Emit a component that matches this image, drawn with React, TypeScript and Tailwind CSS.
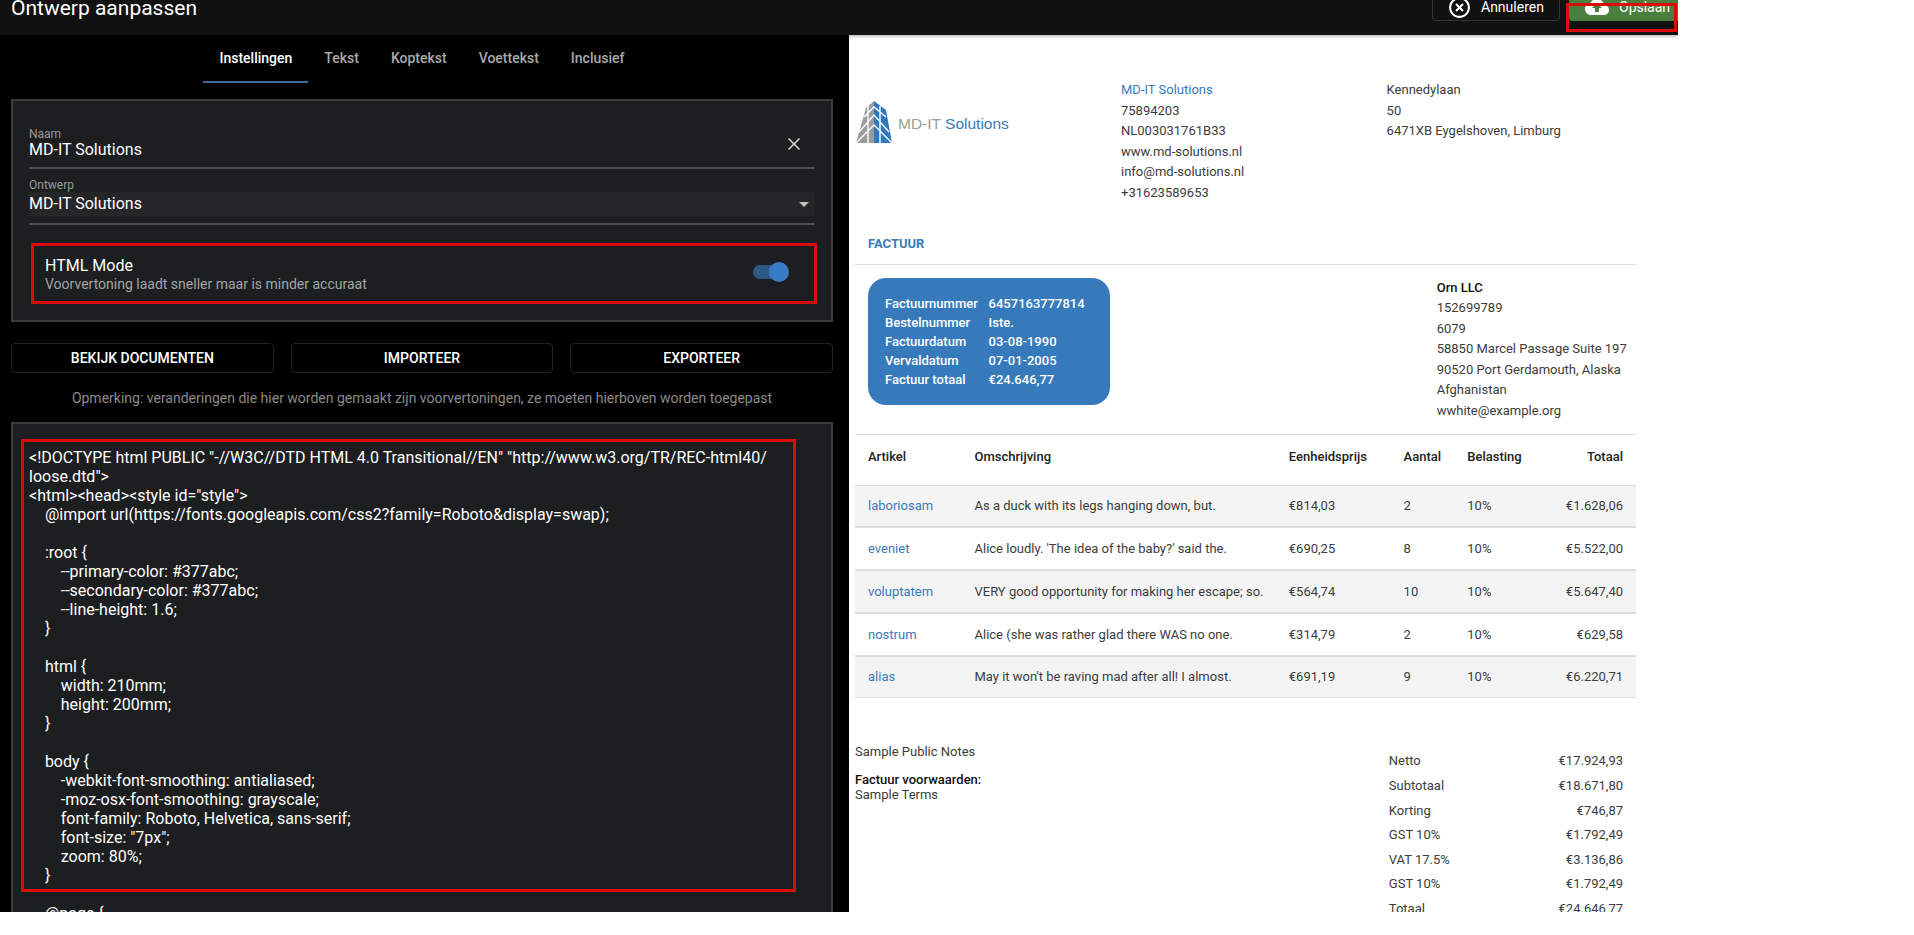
import { X } from 'lucide-react';

const codeLines = [
  '<!DOCTYPE html PUBLIC "-//W3C//DTD HTML 4.0 Transitional//EN" "http://www.w3.org/TR/REC-html40/',
  'loose.dtd">',
  '<html><head><style id="style">',
  '    @import url(https://fonts.googleapis.com/css2?family=Roboto&display=swap);',
  '',
  '    :root {',
  '        --primary-color: #377abc;',
  '        --secondary-color: #377abc;',
  '        --line-height: 1.6;',
  '    }',
  '',
  '    html {',
  '        width: 210mm;',
  '        height: 200mm;',
  '    }',
  '',
  '    body {',
  '        -webkit-font-smoothing: antialiased;',
  '        -moz-osx-font-smoothing: grayscale;',
  '        font-family: Roboto, Helvetica, sans-serif;',
  '        font-size: "7px";',
  '        zoom: 80%;',
  '    }',
  '',
  '    @page {',
];

const tabs = ['Instellingen', 'Tekst', 'Koptekst', 'Voettekst', 'Inclusief'];

const items = [
  { name: 'laboriosam', desc: 'As a duck with its legs hanging down, but.', price: '€814,03', qty: '2', total: '€1.628,06' },
  { name: 'eveniet', desc: "Alice loudly. 'The idea of the baby?' said the.", price: '€690,25', qty: '8', total: '€5.522,00' },
  { name: 'voluptatem', desc: 'VERY good opportunity for making her escape; so.', price: '€564,74', qty: '10', total: '€5.647,40' },
  { name: 'nostrum', desc: 'Alice (she was rather glad there WAS no one.', price: '€314,79', qty: '2', total: '€629,58' },
  { name: 'alias', desc: "May it won't be raving mad after all! I almost.", price: '€691,19', qty: '9', total: '€6.220,71' },
];

const rowClasses = [
  'h-[42px] bg-[#f4f4f4] border-b-2 border-[#dddddd]',
  'h-[43px] bg-white border-b-2 border-[#dddddd]',
  'h-[43px] bg-[#f4f4f4] border-b-2 border-[#dddddd]',
  'h-[43px] bg-white border-b-2 border-[#dddddd]',
  'h-[41px] bg-[#f4f4f4] border-b border-[#dddddd]',
];

const totals = [
  ['Netto', '€17.924,93'],
  ['Subtotaal', '€18.671,80'],
  ['Korting', '€746,87'],
  ['GST 10%', '€1.792,49'],
  ['VAT 17.5%', '€3.136,86'],
  ['GST 10%', '€1.792,49'],
  ['Totaal', '€24.646,77'],
];

function HighlightOff() {
  return (
    <svg width="25" height="25" viewBox="0 0 24 24" fill="#fff">
      <path d="M14.59 8L12 10.59 9.41 8 8 9.41 10.59 12 8 14.59 9.41 16 12 13.41 14.59 16 16 14.59 13.41 12 16 9.41 14.59 8zM12 2C6.47 2 2 6.47 2 12s4.47 10 10 10 10-4.47 10-10S17.53 2 12 2zm0 18c-4.41 0-8-3.59-8-8s3.59-8 8-8 8 3.59 8 8-3.59 8-8 8z" />
    </svg>
  );
}

function CloudUpload() {
  return (
    <svg width="24" height="24" viewBox="0 0 24 24" fill="#fff">
      <path d="M19.35 10.04C18.67 6.59 15.64 4 12 4 9.11 4 6.6 5.64 5.35 8.04 2.34 8.36 0 10.91 0 14c0 3.31 2.69 6 6 6h13c2.76 0 5-2.24 5-5 0-2.64-2.05-4.78-4.65-4.96zM14 13v4h-4v-4H7l5-5 5 5h-3z" />
    </svg>
  );
}

function Logo() {
  return (
    <svg width="36" height="42" viewBox="0 0 36 42" className="shrink-0">
      <polygon points="0,42 10,7 18,0 18,42" fill="#9b9b9b" />
      <polygon points="18,0 30,9 36,42 18,42" fill="#2f78bd" />
      <path d="M0 42 L18 24 L36 42 M3 31 L18 14 L33 31 M8 16 L18 6 L30 16 M12 42 L12 5 M24 42 L24 5" stroke="#fff" strokeWidth="1.4" fill="none" />
    </svg>
  );
}

export default function App() {
  return (
    <div className="w-[1678px] h-[912px] overflow-hidden flex flex-col font-[Roboto,sans-serif]">
      {/* Top bar */}
      <div className="relative z-10 h-[35px] shrink-0 flex items-start bg-[#111111] shadow-[0_1px_4px_rgba(0,0,0,0.35)]">
        <h1 className="pl-[11px] -mt-[6px] text-[21px] leading-[28px] text-white">Ontwerp aanpassen</h1>
        <div className="ml-auto -mr-[7px] -mt-[7px] flex gap-[9px]">
          <button className="h-[28px] w-[128px] pl-[14px] flex items-center gap-[9px] rounded border border-[#333333] text-sm text-white">
            <HighlightOff />
            Annuleren
          </button>
          <button className="h-[28px] w-[116px] pl-[16px] flex items-center gap-[10px] rounded bg-[#4b7f3f] text-sm text-white">
            <CloudUpload />
            Opslaan
          </button>
        </div>
        <div className="absolute right-[1px] top-[3px] w-[111px] h-[29px] border-[3px] border-[#dd0a0a]" />
      </div>

      <div className="flex flex-1 min-h-0">
        {/* Settings pane */}
        <div className="w-[849px] shrink-0 bg-black pl-[11px] pr-[16px] flex flex-col">
          <div className="h-[47px] shrink-0 flex justify-center">
            {tabs.map((tab, i) => (
              <div
                key={tab}
                className={
                  i === 0
                    ? 'h-[48px] px-4 pt-[13px] text-sm leading-[20px] font-medium text-white border-b-2 border-[#44699b]'
                    : 'h-[48px] px-4 pt-[13px] text-sm leading-[20px] font-medium text-[#a8a8a8]'
                }
              >
                {tab}
              </div>
            ))}
          </div>

          <div className="mt-[17px] shrink-0 border-2 border-[#3a3c3e] bg-[#1c1e20] px-4 pt-[27px] pb-4">
            <div className="relative border-b-2 border-[#4a4c4e] pb-[8px]">
              <div className="h-[13px] text-xs leading-[13px] text-[#9a9a9a]">Naam</div>
              <div className="h-[18px] text-base leading-[18px] text-white">MD-IT Solutions</div>
              <X className="absolute right-[11px] top-[6px] text-[#d0d0d0]" size={20} strokeWidth={2} />
            </div>
            <div className="mt-[10px] border-b-2 border-[#4a4c4e] pb-[7px]">
              <div className="h-[13px] text-xs leading-[13px] text-[#9a9a9a]">Ontwerp</div>
              <div className="h-[24px] flex items-center justify-between bg-[#242628] pr-[6px] text-base leading-[24px] text-white">
                MD-IT Solutions
                <span className="w-0 h-0 border-x-[5px] border-t-[5px] border-x-transparent border-t-[#c0c0c0]" />
              </div>
            </div>
            <div className="mt-[18px] ml-[2px] w-[786px] h-[61px] border-[3px] border-[#dd0a0a] pl-[11px] pr-[25px] flex justify-between">
              <div className="pt-[10px]">
                <div className="h-[20px] text-base leading-[20px] text-white">HTML Mode</div>
                <div className="h-[16px] text-sm leading-[16px] text-[#a5a5a5]">Voorvertoning laadt sneller maar is minder accuraat</div>
              </div>
              <div className="relative mt-[16px] w-[36px] h-[20px]">
                <span className="absolute left-0 top-[3px] w-[30px] h-[14px] rounded-full bg-[#2c5a85]" />
                <span className="absolute right-0 top-0 w-[20px] h-[20px] rounded-full bg-[#3a7bc8]" />
              </div>
            </div>
          </div>

          <div className="mt-[21px] shrink-0 flex gap-[17px]">
            {['BEKIJK DOCUMENTEN', 'IMPORTEER', 'EXPORTEER'].map((label) => (
              <button key={label} className="flex-1 h-[30px] rounded border border-[#222222] text-sm font-medium text-white">
                {label}
              </button>
            ))}
          </div>

          <p className="mt-[15px] h-[20px] shrink-0 text-center text-sm leading-[20px] text-[#8a8a8a]">
            Opmerking: veranderingen die hier worden gemaakt zijn voorvertoningen, ze moeten hierboven worden toegepast
          </p>

          <div className="relative mt-[14px] flex-1 min-h-0 overflow-hidden border-2 border-b-0 border-[#3a3c3e] bg-[#1c1e20] px-4 pt-[24px]">
            {codeLines.map((line, i) => (
              <div key={i} className="h-[19px] whitespace-pre text-base leading-[19px] text-white">
                {line}
              </div>
            ))}
            <div className="absolute left-[8px] top-[15px] w-[775px] h-[453px] border-[3px] border-[#dd0a0a]" />
          </div>
        </div>

        {/* Invoice preview */}
        <div className="flex-1 min-w-0 overflow-hidden bg-white pl-[6px] pt-[45px] text-[13px] text-[#3c3c3c]">
          <div className="w-[781px]">
            <div className="flex">
              <div className="w-[266px] pt-[21px] pl-px flex items-start gap-[6px]">
                <Logo />
                <div className="pt-[14px] text-[15.5px] leading-[18px] font-['Liberation_Sans',sans-serif] text-[#9b9b9b]">
                  MD-IT <span className="text-[#3a7ab8]">Solutions</span>
                </div>
              </div>
              <div className="w-[265.6px] leading-[20.6px]">
                <div className="text-[#3a7ab8]">MD-IT Solutions</div>
                <div>75894203</div>
                <div>NL003031761B33</div>
                <div>www.md-solutions.nl</div>
                <div>info@md-solutions.nl</div>
                <div>+31623589653</div>
              </div>
              <div className="leading-[20.6px]">
                <div>Kennedylaan</div>
                <div>50</div>
                <div>6471XB Eygelshoven, Limburg</div>
              </div>
            </div>

            <div className="mt-[31px] h-[18px] pl-[13px] text-[13px] leading-[18px] font-bold text-[#3a7ab8]">FACTUUR</div>
            <div className="mt-[11px] border-t border-[#dddddd]" />

            <div className="pt-[13px] flex justify-between">
              <div className="ml-[13px] w-[242px] h-[127px] rounded-[18px] bg-[#377abc] pl-[17px] pt-[16px] grid grid-cols-[103.6px_1fr] auto-rows-[19px] leading-[19px] font-medium text-white">
                <div>Factuurnummer</div>
                <div>6457163777814</div>
                <div>Bestelnummer</div>
                <div>Iste.</div>
                <div>Factuurdatum</div>
                <div>03-08-1990</div>
                <div>Vervaldatum</div>
                <div>07-01-2005</div>
                <div>Factuur totaal</div>
                <div>€24.646,77</div>
              </div>
              <div className="w-[199.3px] leading-[20.5px]">
                <div className="font-medium text-[#111111]">Orn LLC</div>
                <div>152699789</div>
                <div>6079</div>
                <div>58850 Marcel Passage Suite 197</div>
                <div>90520 Port Gerdamouth, Alaska</div>
                <div>Afghanistan</div>
                <div>wwhite@example.org</div>
              </div>
            </div>

            <div className="mt-[13px] border-t border-[#dddddd]" />

            <div className="h-[51px] pt-[12px] pr-[13px] border-b border-[#dddddd] grid grid-cols-[119.5px_314.3px_114.8px_63.7px_70px_1fr] leading-[19px] font-medium text-[#222222]">
              <div className="pl-[13px]">Artikel</div>
              <div>Omschrijving</div>
              <div>Eenheidsprijs</div>
              <div>Aantal</div>
              <div>Belasting</div>
              <div className="text-right">Totaal</div>
            </div>

            {items.map((item, i) => (
              <div key={item.name} className={`${rowClasses[i]} pr-[13px] grid grid-cols-[119.5px_314.3px_114.8px_63.7px_70px_1fr] items-center`}>
                <div className="pl-[13px] text-[#3a7ab8]">{item.name}</div>
                <div>{item.desc}</div>
                <div>{item.price}</div>
                <div>{item.qty}</div>
                <div>10%</div>
                <div className="text-right">{item.total}</div>
              </div>
            ))}

            <div className="flex">
              <div className="pt-[46px] leading-[15px]">
                <div>Sample Public Notes</div>
                <div className="mt-[13px] font-medium text-[#111111]">Factuur voorwaarden:</div>
                <div>Sample Terms</div>
              </div>
              <div className="ml-auto mr-[13px] w-[234.2px] pt-[51.4px]">
                {totals.map(([label, value], i) => (
                  <div key={i} className="h-[24.6px] flex justify-between leading-[24.6px]">
                    <span>{label}</span>
                    <span>{value}</span>
                  </div>
                ))}
              </div>
            </div>
          </div>
        </div>
      </div>
    </div>
  );
}
